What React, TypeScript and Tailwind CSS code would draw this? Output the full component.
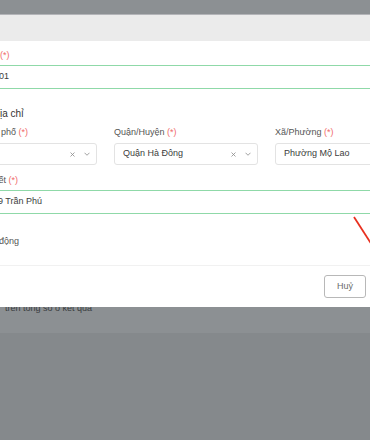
import React from 'react';

function Req() {
  return <span className="text-[#f06a6a]">(*)</span>;
}

function ClearChevron() {
  return (
    <div className="flex items-center">
      <svg className="h-[5px] w-[5px]" viewBox="0 0 10 10" fill="none" stroke="#8a8a8a" strokeWidth="1.6">
        <path d="M1 1l8 8M9 1l-8 8" />
      </svg>
      <svg className="ml-[9px] h-[4px] w-[6px]" viewBox="0 0 12 8" fill="none" stroke="#8a8a8a" strokeWidth="1.6">
        <path d="M1 1.5l5 5 5-5" />
      </svg>
    </div>
  );
}

function SelectBox({ value, clearable = true }: { value: string; clearable?: boolean }) {
  return (
    <div className="mt-[5px] flex h-[22px] items-center rounded-[3px] border border-[#e3e3e3] pl-2 pr-[6px]">
      <span className="flex-1 truncate text-[9px] text-[#3c3c3c]">{value}</span>
      {clearable && <ClearChevron />}
    </div>
  );
}

function Field({ label, value }: { label: string; value: string }) {
  return (
    <div>
      <div className="whitespace-nowrap text-[9px] leading-[12px] text-[#555]">
        {label} <Req />
      </div>
      <SelectBox value={value} />
    </div>
  );
}

export default function App() {
  return (
    <div className="relative h-[440px] w-[370px] overflow-hidden bg-[#85898c] font-['Liberation_Sans',Arial,sans-serif]">
      {/* page behind the overlay */}
      <div className="h-[333px] bg-[#8c9093] pl-[5px] pt-[302px]">
        <p className="whitespace-nowrap text-[9px] leading-[12px] text-[#3b3e41]">trên tổng số ô kết quả</p>
      </div>

      {/* modal */}
      <div className="absolute left-[-59px] top-[14px] w-[491px] bg-white">
        <div className="h-[27px] border-t border-[#b3b4b8] bg-[#ebebeb]" />

        <div className="px-3 pb-[18px] pt-[8px]">
          <div className="whitespace-nowrap text-[9px] leading-[12px] text-[#555]">
            Mã số thuế <Req />
          </div>
          <div className="mt-[4px] flex h-[24px] items-center rounded-[3px] border border-[#8fd9a8] pl-[5px] pr-2 text-[9px] text-[#3c3c3c]">
            0101234501
          </div>

          <div className="-ml-[3px] mt-[19px] whitespace-nowrap text-[10px] font-medium leading-[12px] text-[#333]">
            Thông tin địa chỉ
          </div>

          <div className="mt-[6px] grid grid-cols-[144px_144px_144px] gap-x-[17px]">
            <Field label="Tỉnh/Thành phố" value="Hà Nội" />
            <Field label="Quận/Huyện" value="Quận Hà Đông" />
            <Field label="Xã/Phường" value="Phường Mộ Lao" />
          </div>

          <div className="-ml-[3px] mt-[9px] whitespace-nowrap text-[9px] leading-[12px] text-[#555]">
            Địa chỉ chi tiết <Req />
          </div>
          <div className="mt-[4px] flex h-[24px] items-center rounded-[3px] border border-[#8fd9a8] px-2 text-[9px] text-[#3c3c3c]">
            Số nhà 19 Trần Phú
          </div>

          <div className="-ml-[4px] mt-[21px] whitespace-nowrap text-[9px] leading-[12px] text-[#555]">Cập nhật tự động</div>
        </div>

        <div className="flex justify-end gap-[6px] border-t border-[#f1f1f1] px-3 pb-[9px] pt-[9px]">
          <button className="h-[23px] w-[42px] rounded-[3px] border border-[#b8b8b8] text-[9px] text-[#6b6b6b]">Huỷ</button>
          <button className="h-[23px] w-[48px] rounded-[3px] bg-[#2f9e5b] text-[9px] text-white">Lưu lại</button>
        </div>
      </div>

      {/* annotation */}
      <svg className="absolute left-[350px] top-[214px] h-[34px] w-[22px]" viewBox="0 0 22 34" fill="none">
        <path d="M4 3L22 31" stroke="#e8301f" strokeWidth="1.8" />
      </svg>
    </div>
  );
}
